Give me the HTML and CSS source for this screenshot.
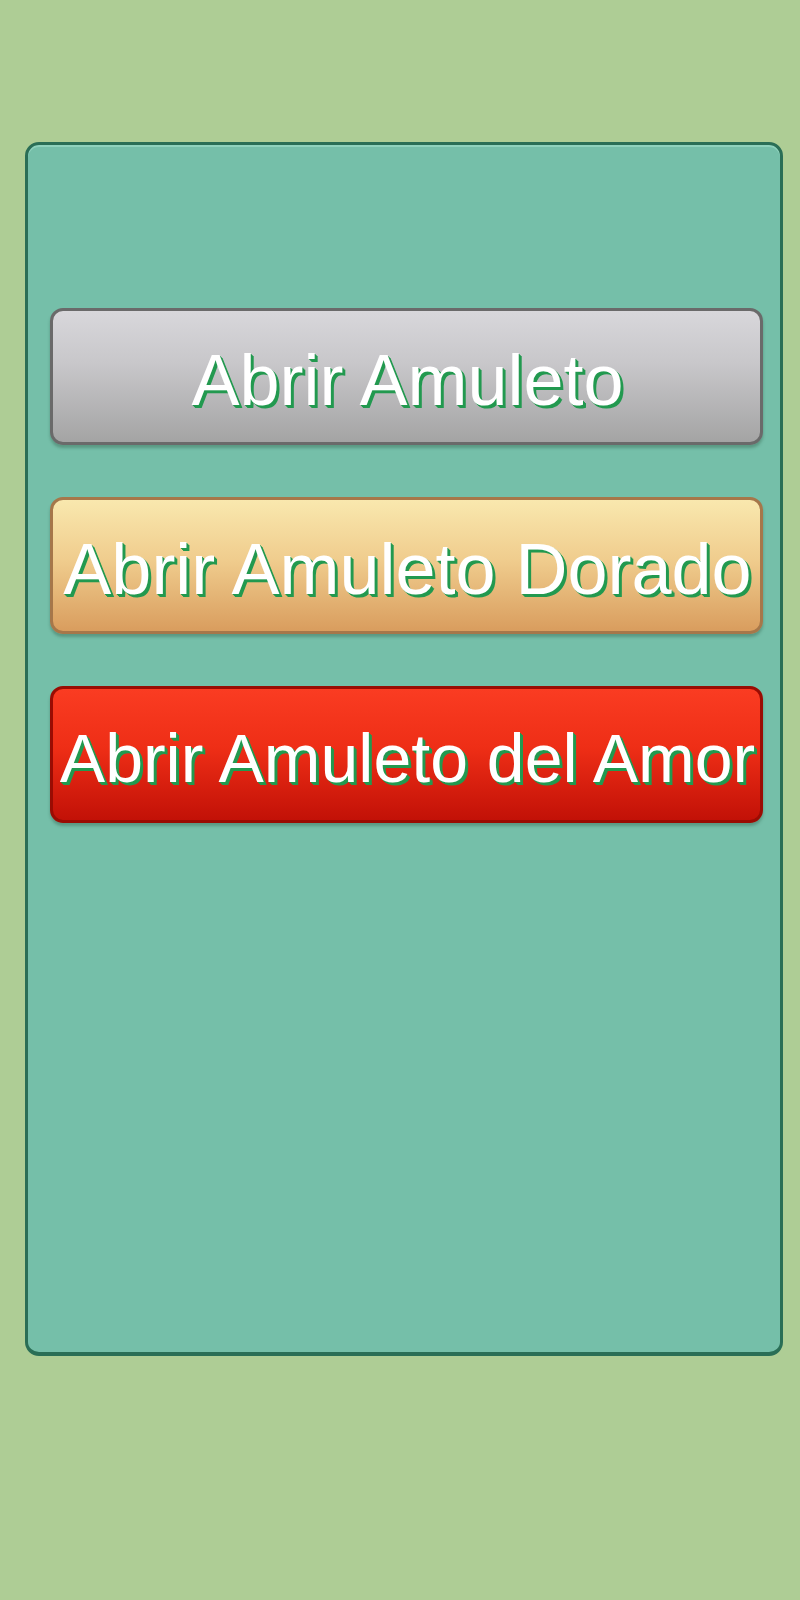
FILE: index.html
```html
<!DOCTYPE html>
<html>
<head>
<meta charset="utf-8">
<link rel="stylesheet" href="styles.css">
</head>
<body>
<div class="panel">
  <div class="btn btn-gray"><span>Abrir Amuleto</span></div>
  <div class="btn btn-gold"><span>Abrir Amuleto Dorado</span></div>
  <div class="btn btn-red btn-small"><span>Abrir Amuleto del Amor</span></div>
</div>
</body>
</html>
```
FILE: styles.css
```css
html, body {
  margin: 0;
  padding: 0;
  background: #aecd95;
}
body {
  width: 800px;
  height: 1600px;
  padding-top: 142px;
  box-sizing: border-box;
  font-family: "Liberation Sans", Arial, sans-serif;
}
.panel {
  margin-left: 25px;
  width: 758px;
  height: 1214px;
  box-sizing: border-box;
  background: #75bfa9;
  border: 3px solid #2a6e56;
  border-bottom-width: 4px;
  border-radius: 14px;
  box-shadow: inset 0 2px 0 #8fd2bd;
  padding: 163px 17px 0 22px;
  display: flex;
  flex-direction: column;
  gap: 52px;
}
.btn {
  height: 137px;
  box-sizing: border-box;
  border-radius: 13px;
  border: 3px solid #666;
  display: flex;
  align-items: center;
  justify-content: center;
  box-shadow: 0 3px 3px rgba(40, 80, 60, 0.35);
  white-space: nowrap;
  overflow: visible;
}
.btn span {
  color: #ffffff;
  font-size: 72px;
  line-height: 1;
  text-shadow: 3px 3px 0 #22994f, 2px 2px 0 #22994f, 1px 1px 0 #22994f;
  position: relative;
  top: 3px;
  left: 1px;
}
.btn-small span {
  font-size: 68px;
}
.btn-gray {
  background: linear-gradient(#d8d7db 0%, #c8c7ca 40%, #a4a4a4 100%);
  border-color: #6a6a6a;
}
.btn-gold {
  background: linear-gradient(#f9e8ae 0%, #f0cd8e 45%, #d99d5e 100%);
  border-color: #a6774a;
}
.btn-red {
  background: linear-gradient(#fa3c22 0%, #ee2e16 45%, #c21107 100%);
  border-color: #9a0c03;
}
```
